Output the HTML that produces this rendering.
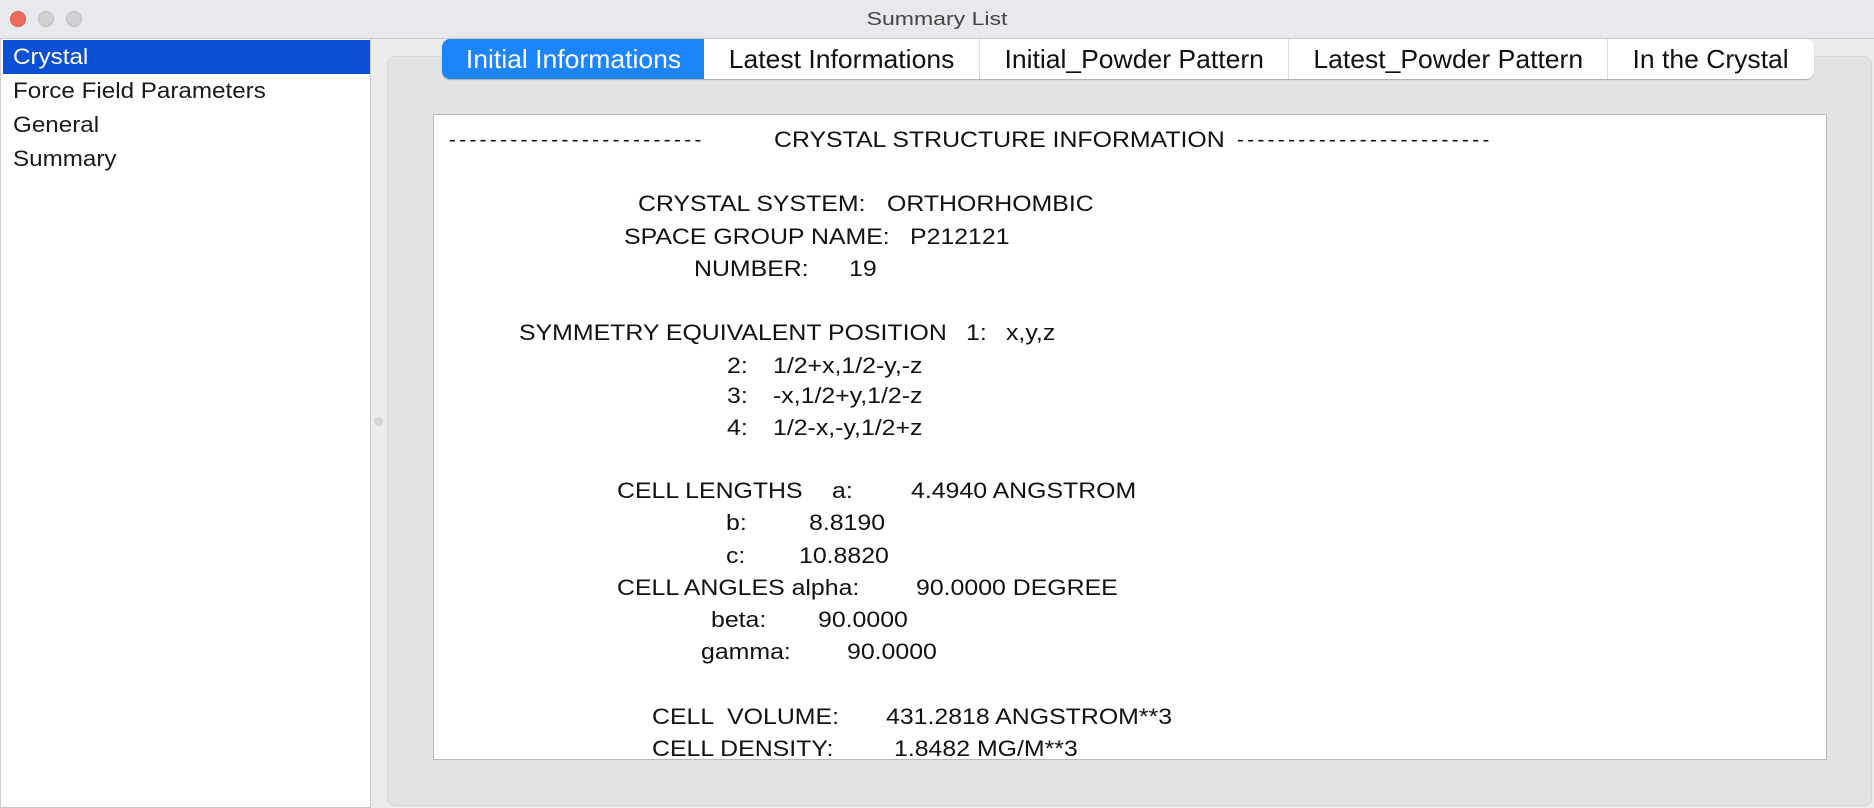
<!DOCTYPE html>
<html><head><style>
*{margin:0;padding:0;box-sizing:border-box}
body{width:1874px;height:808px;background:#ececec;font-family:"Liberation Sans",Arial,sans-serif;position:relative;overflow:hidden;color:#1a1a1a}
.title{position:absolute;left:0;top:0;width:1874px;height:39px;background:#e9e8ed;border-bottom:1px solid #c9c9c9;text-align:center;line-height:38px;font-size:18px;color:#444}
.title span{display:inline-block;transform:scaleX(1.28)}
.dot{position:absolute;top:11px;width:16px;height:16px;border-radius:50%;background:#d0d0d3;border:1px solid #bdbdc0}
.side{position:absolute;left:0;top:39px;width:371px;height:769px;background:#fff;border-right:1px solid #c8c8c8;border-left:1px solid #d0d0d0;border-bottom:1px solid #c8c8c8}
.item{position:absolute;left:12px;font-size:22px;line-height:34px;transform:scaleX(1.1);transform-origin:left}
.sel{position:absolute;left:2px;top:1px;width:367px;height:34px;background:#0b4fd7}
.panel{position:absolute;left:387px;top:56px;width:1485px;height:750px;background:#e3e3e3;border:1px solid #d6d6d6;border-radius:8px}
.tabs{position:absolute;left:442px;top:39px;height:40px;width:1372px;background:#fff;border-radius:8px;box-shadow:0 1px 1px rgba(0,0,0,.25);display:flex}
.tab{height:40px;line-height:40px;font-size:26px;text-align:center;border-right:1px solid #ddd;color:#111;white-space:nowrap}
.tab span{display:inline-block;transform:scaleX(1.02)}
.tab.on{background:#1c85fb;color:#fff;border-radius:8px 0 0 8px;border-right:none}
.ta{position:absolute;left:433px;top:114px;width:1394px;height:646px;background:#fff;border:1px solid #b9b9b9}
.t{position:absolute;font-size:22px;white-space:pre;line-height:24px;color:#111;transform:scaleX(1.13);transform-origin:left}
.d{position:absolute;font-size:20.5px;white-space:pre;line-height:24px;color:#111;letter-spacing:3.4px}
</style></head><body>
<div class="title"><span>Summary List</span>
<div class="dot" style="left:10px;background:#ed6a5e;border-color:#d85a4f"></div>
<div class="dot" style="left:38px"></div>
<div class="dot" style="left:66px"></div>
</div>
<div class="side">
<div class="sel"></div>
<div class="item" style="top:1px;color:#fff">Crystal</div>
<div class="item" style="top:35px">Force Field Parameters</div>
<div class="item" style="top:69px">General</div>
<div class="item" style="top:103px">Summary</div>
</div>
<div style="position:absolute;left:374px;top:417px;width:9px;height:9px;border-radius:50%;background:#d4d4d4"></div>
<div class="panel"></div>
<div class="tabs">
<div class="tab on" style="width:262px"><span>Initial Informations</span></div>
<div class="tab" style="width:276px"><span>Latest Informations</span></div>
<div class="tab" style="width:309px"><span>Initial_Powder Pattern</span></div>
<div class="tab" style="width:319px"><span>Latest_Powder Pattern</span></div>
<div class="tab" style="width:206px;border-right:none"><span>In the Crystal</span></div>
</div>
<div class="ta"></div>
<div class="d" style="left:449px;top:128px">-------------------------</div>
<div class="t" style="left:774px;top:128px">CRYSTAL STRUCTURE INFORMATION</div>
<div class="d" style="left:1237px;top:128px">-------------------------</div>
<div class="t" style="left:638px;top:192px">CRYSTAL SYSTEM:</div><div class="t" style="left:887px;top:192px">ORTHORHOMBIC</div>
<div class="t" style="left:624px;top:225px">SPACE GROUP NAME:</div><div class="t" style="left:910px;top:225px">P212121</div>
<div class="t" style="left:694px;top:257px">NUMBER:</div><div class="t" style="left:849px;top:257px">19</div>
<div class="t" style="left:519px;top:321px">SYMMETRY EQUIVALENT POSITION</div><div class="t" style="left:966px;top:321px">1:</div><div class="t" style="left:1006px;top:321px">x,y,z</div>
<div class="t" style="left:727px;top:354px">2:</div><div class="t" style="left:773px;top:354px">1/2+x,1/2-y,-z</div>
<div class="t" style="left:727px;top:384px">3:</div><div class="t" style="left:773px;top:384px">-x,1/2+y,1/2-z</div>
<div class="t" style="left:727px;top:416px">4:</div><div class="t" style="left:773px;top:416px">1/2-x,-y,1/2+z</div>
<div class="t" style="left:617px;top:479px">CELL LENGTHS</div><div class="t" style="left:832px;top:479px">a:</div><div class="t" style="left:911px;top:479px">4.4940 ANGSTROM</div>
<div class="t" style="left:726px;top:511px">b:</div><div class="t" style="left:809px;top:511px">8.8190</div>
<div class="t" style="left:726px;top:544px">c:</div><div class="t" style="left:799px;top:544px">10.8820</div>
<div class="t" style="left:617px;top:576px">CELL ANGLES alpha:</div><div class="t" style="left:916px;top:576px">90.0000 DEGREE</div>
<div class="t" style="left:711px;top:608px">beta:</div><div class="t" style="left:818px;top:608px">90.0000</div>
<div class="t" style="left:701px;top:640px">gamma:</div><div class="t" style="left:847px;top:640px">90.0000</div>
<div class="t" style="left:652px;top:705px">CELL  VOLUME:</div><div class="t" style="left:886px;top:705px">431.2818 ANGSTROM**3</div>
<div class="t" style="left:652px;top:737px;height:22px;overflow:hidden">CELL DENSITY:</div><div class="t" style="left:894px;top:737px;height:22px;overflow:hidden">1.8482 MG/M**3</div>
</body></html>
